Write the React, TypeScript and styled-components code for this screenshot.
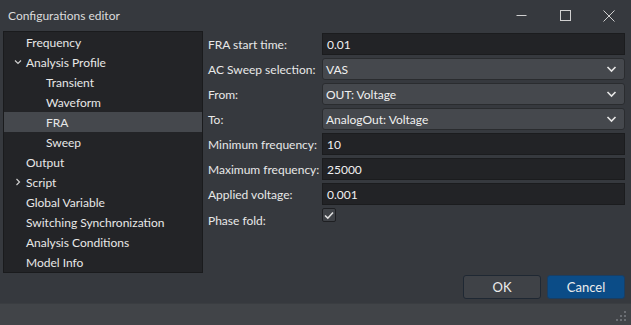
import React from "react";
import styled, { createGlobalStyle } from "styled-components";

const Global = createGlobalStyle`
  html, body { margin: 0; padding: 0; background: #36393e; }
  body { font-family: Lato, "Noto Sans", sans-serif; font-size: 12px; color: #e8e8e8; }
  * { box-sizing: border-box; }
`;

const Window = styled.div`
  width: 631px;
  height: 325px;
  display: flex;
  flex-direction: column;
  background: #36393e;
  overflow: hidden;
`;

const TitleBar = styled.div`
  height: 31px;
  flex: none;
  display: flex;
  align-items: center;
  padding-left: 8px;
`;

const Title = styled.div`
  flex: 1;
  font-size: 12px;
  color: #dcdcdc;
`;

const WinButton = styled.div`
  width: 44px;
  height: 30px;
  display: flex;
  align-items: center;
  justify-content: center;
  color: #d0d0d0;
`;

const Body = styled.div`
  flex: 1;
  display: flex;
  flex-direction: column;
  padding: 0 6px 0 3px;
`;

const Main = styled.div`
  display: flex;
  gap: 5px;
  height: 242px;
`;

const Tree = styled.div`
  width: 200px;
  height: 242px;
  flex: none;
  background: #232427;
  border: 1px solid #1a1b1d;
  display: flex;
  flex-direction: column;
`;

const TreeRow = styled.div<{ $level: number; $selected?: boolean }>`
  height: 20px;
  display: flex;
  align-items: center;
  padding-left: ${(p) => 22 + p.$level * 20}px;
  position: relative;
  background: ${(p) => (p.$selected ? "#45484d" : "transparent")};
  color: #e8e8e8;
  white-space: nowrap;
`;

const Chevron = styled.span`
  position: absolute;
  left: 9px;
  top: 5px;
  width: 10px;
  height: 10px;
  display: flex;
  color: #cfcfcf;
`;

const Form = styled.div`
  flex: 1;
  display: flex;
  flex-direction: column;
  gap: 3px;
  padding-top: 2px;
`;

const FormRow = styled.div<{ $top?: boolean }>`
  display: flex;
  align-items: ${(p) => (p.$top ? "flex-start" : "center")};
  height: 22px;
`;

const Label = styled.div<{ $pad?: boolean }>`
  width: 114px;
  flex: none;
  white-space: nowrap;
  color: #e8e8e8;
  ${(p) => (p.$pad ? "padding-top: 5px;" : "")}
`;

const Input = styled.div`
  flex: 1;
  height: 22px;
  background: #222326;
  border: 1px solid #1b1c1e;
  display: flex;
  align-items: center;
  padding-left: 4px;
  color: #f0f0f0;
`;

const Select = styled.div`
  flex: 1;
  height: 22px;
  background: #45484d;
  border: 1px solid #2a2c2f;
  border-radius: 3px;
  display: flex;
  align-items: center;
  justify-content: space-between;
  padding: 0 7px 0 3px;
  color: #f0f0f0;
`;

const Check = styled.div`
  width: 14px;
  height: 14px;
  border: 1px solid #1e1f22;
  border-radius: 2px;
  background: #3f4247;
  display: flex;
  align-items: center;
  justify-content: center;
`;

const Buttons = styled.div`
  display: flex;
  justify-content: flex-end;
  gap: 6px;
  padding-top: 2px;
`;

const Button = styled.div<{ $primary?: boolean }>`
  width: 78px;
  height: 24px;
  border-radius: 3px;
  display: flex;
  align-items: center;
  justify-content: center;
  font-size: 13px;
  color: #ececec;
  background: ${(p) => (p.$primary ? "#0b4c87" : "#3f4247")};
  border: 1px solid ${(p) => (p.$primary ? "#1a3e62" : "#1f2833")};
`;

const StatusBar = styled.div`
  height: 22px;
  flex: none;
  margin-top: auto;
  background: #414448;
  border-top: 1px solid #3a3d41;
  display: flex;
  justify-content: flex-end;
  align-items: flex-end;
  padding: 0 4px 3px 0;
`;

const ChevronDown = () => (
  <svg width="10" height="10" viewBox="0 0 10 10">
    <path d="M2 3.5 L5 6.5 L8 3.5" fill="none" stroke="currentColor" strokeWidth="1.2" />
  </svg>
);
const ChevronRight = () => (
  <svg width="10" height="10" viewBox="0 0 10 10">
    <path d="M3.5 2 L6.5 5 L3.5 8" fill="none" stroke="currentColor" strokeWidth="1.2" />
  </svg>
);

const SelectArrow = () => (
  <svg width="11" height="8" viewBox="0 0 11 8">
    <path d="M1.5 2 L5.5 6 L9.5 2" fill="none" stroke="#e6e6e6" strokeWidth="1.6" />
  </svg>
);

const Grip = () => (
  <svg width="12" height="12" viewBox="0 0 12 12" fill="#6b6e73">
    <rect x="9" y="1" width="2" height="2" />
    <rect x="5" y="5" width="2" height="2" />
    <rect x="9" y="5" width="2" height="2" />
    <rect x="1" y="9" width="2" height="2" />
    <rect x="5" y="9" width="2" height="2" />
    <rect x="9" y="9" width="2" height="2" />
  </svg>
);

type Node = { label: string; level: number; expand?: "open" | "closed"; selected?: boolean };
const nodes: Node[] = [
  { label: "Frequency", level: 0 },
  { label: "Analysis Profile", level: 0, expand: "open" },
  { label: "Transient", level: 1 },
  { label: "Waveform", level: 1 },
  { label: "FRA", level: 1, selected: true },
  { label: "Sweep", level: 1 },
  { label: "Output", level: 0 },
  { label: "Script", level: 0, expand: "closed" },
  { label: "Global Variable", level: 0 },
  { label: "Switching Synchronization", level: 0 },
  { label: "Analysis Conditions", level: 0 },
  { label: "Model Info", level: 0 },
];

type Field = { label: string; kind: "input" | "select"; value: string };
const fields: Field[] = [
  { label: "FRA start time:", kind: "input", value: "0.01" },
  { label: "AC Sweep selection:", kind: "select", value: "VAS" },
  { label: "From:", kind: "select", value: "OUT: Voltage" },
  { label: "To:", kind: "select", value: "AnalogOut: Voltage" },
  { label: "Minimum frequency:", kind: "input", value: "10" },
  { label: "Maximum frequency:", kind: "input", value: "25000" },
  { label: "Applied voltage:", kind: "input", value: "0.001" },
];

export default function App() {
  return (
    <Window>
      <Global />
      <TitleBar>
        <Title>Configurations editor</Title>
        <WinButton>
          <svg width="11" height="11" viewBox="0 0 11 11">
            <path d="M0.5 5.5 H10.5" stroke="currentColor" strokeWidth="1" />
          </svg>
        </WinButton>
        <WinButton>
          <svg width="11" height="11" viewBox="0 0 11 11">
            <rect x="0.5" y="0.5" width="10" height="10" fill="none" stroke="currentColor" strokeWidth="1" />
          </svg>
        </WinButton>
        <WinButton>
          <svg width="12" height="12" viewBox="0 0 12 12">
            <path d="M0.5 0.5 L11.5 11.5 M11.5 0.5 L0.5 11.5" stroke="currentColor" strokeWidth="1" />
          </svg>
        </WinButton>
      </TitleBar>
      <Body>
        <Main>
          <Tree>
            {nodes.map((n) => (
              <TreeRow key={n.label} $level={n.level} $selected={n.selected}>
                {n.expand && (
                  <Chevron>{n.expand === "open" ? <ChevronDown /> : <ChevronRight />}</Chevron>
                )}
                {n.label}
              </TreeRow>
            ))}
          </Tree>
          <Form>
            {fields.map((f) => (
              <FormRow key={f.label}>
                <Label>{f.label}</Label>
                {f.kind === "input" ? (
                  <Input>{f.value}</Input>
                ) : (
                  <Select>
                    {f.value}
                    <SelectArrow />
                  </Select>
                )}
              </FormRow>
            ))}
            <FormRow $top>
              <Label $pad>Phase fold:</Label>
              <Check>
                <svg width="10" height="9" viewBox="0 0 10 9">
                  <path d="M1 4.5 L3.8 7.2 L9 1.5" fill="none" stroke="#e0e0e0" strokeWidth="1.6" />
                </svg>
              </Check>
            </FormRow>
          </Form>
        </Main>
        <Buttons>
          <Button>OK</Button>
          <Button $primary>Cancel</Button>
        </Buttons>
      </Body>
      <StatusBar>
        <Grip />
      </StatusBar>
    </Window>
  );
}
